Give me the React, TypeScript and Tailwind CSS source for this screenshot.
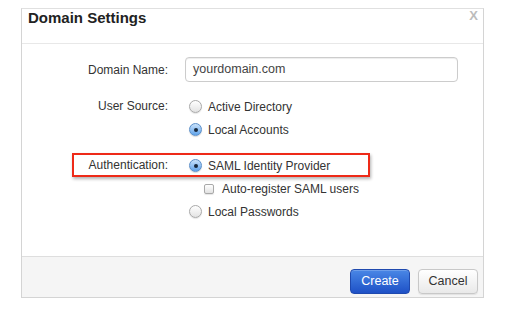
import type { ReactNode } from 'react';

const Radio = ({ checked }: { checked?: boolean }) =>
  checked ? (
    <span className="relative flex h-[13px] w-[13px] shrink-0 items-center justify-center rounded-full border border-[#5b8fc9] bg-gradient-to-b from-[#c9e2fa] to-[#5fa3ea] shadow-[0_1px_1px_rgba(0,0,0,0.15)]">
      <span className="h-[4px] w-[4px] rounded-full bg-[#17283b]" />
    </span>
  ) : (
    <span className="h-[13px] w-[13px] shrink-0 rounded-full border border-[#a9a9a9] bg-gradient-to-b from-[#ffffff] to-[#e3e3e3] shadow-[0_1px_1px_rgba(0,0,0,0.1)]" />
  );

const Checkbox = () => (
  <span className="h-[10px] w-[10px] shrink-0 rounded-[2px] border border-[#a9a9a9] bg-gradient-to-b from-[#ffffff] to-[#e2e2e2] shadow-[0_1px_1px_rgba(0,0,0,0.1)]" />
);

const Option = ({ children, checked }: { children: ReactNode; checked?: boolean }) => (
  <div className="flex h-[23px] items-center gap-[6px]">
    <Radio checked={checked} />
    <span>{children}</span>
  </div>
);

const App = () => {
  return (
    <div className="min-h-screen bg-white pl-[21px] pt-[8px] font-['Liberation_Sans',Arial,sans-serif] text-[12px] text-[#333]">
      <div className="flex h-[290px] w-[463px] flex-col border border-[#d4d4d4] border-t-[#e0e0e0] bg-white">
        {/* Header */}
        <div className="relative h-[35px] shrink-0 border-b border-[#e8e8e8] pl-[6px]">
          <h3 className="text-[15px] font-bold leading-[18px] text-[#222]">Domain Settings</h3>
          <span className="absolute right-[5px] top-[0px] text-[13px] font-bold leading-[13px] text-[#bcbcbc]">X</span>
        </div>

        {/* Body */}
        <div className="flex-1 pt-[13px]">
          <div className="flex h-[25px] items-center">
            <label className="w-[146px] text-right">Domain Name:</label>
            <div className="ml-[17px] flex h-[25px] w-[273px] items-center rounded-[4px] border border-[#cccccc] pl-[7px] text-[12.5px] text-[#444] shadow-[inset_0_1px_1px_rgba(0,0,0,0.075)]">
              yourdomain.com
            </div>
          </div>

          <div className="mt-[13px] flex items-start">
            <div className="w-[146px] text-right leading-[23px]">User Source:</div>
            <div className="ml-[21px] flex flex-col">
              <Option>Active Directory</Option>
              <Option checked>Local Accounts</Option>
            </div>
          </div>

          <div className="relative mt-[13px] flex items-start">
            <div className="w-[146px] text-right leading-[23px]">Authentication:</div>
            <div className="ml-[21px] flex flex-col">
              <Option checked>SAML Identity Provider</Option>
              <div className="flex h-[23px] items-center gap-[8px] pl-[15px]">
                <Checkbox />
                <span>Auto-register SAML users</span>
              </div>
              <Option>Local Passwords</Option>
            </div>
            {/* highlight annotation */}
            <div className="absolute left-[50px] top-[-1px] h-[24px] w-[298px] border-2 border-[#ee2a18] shadow-[1px_2px_3px_rgba(0,0,0,0.3)]" />
          </div>
        </div>

        {/* Footer */}
        <div className="flex h-[41px] shrink-0 items-start justify-end gap-[8px] border-t border-[#dedede] bg-[#f5f5f5] pr-[5px] pt-[12px]">
          <button className="h-[25px] w-[60px] rounded-[4px] border border-[#1f49ae] bg-gradient-to-b from-[#4a87e6] to-[#1f50c6] text-[12.5px] text-white shadow-[inset_0_1px_0_rgba(255,255,255,0.2)]">
            Create
          </button>
          <button className="h-[25px] w-[60px] rounded-[4px] border border-[#c8c8c8] bg-gradient-to-b from-[#ffffff] to-[#e9e9e9] text-[12.5px] text-[#333] shadow-[0_1px_1px_rgba(0,0,0,0.08)]">
            Cancel
          </button>
        </div>
      </div>
    </div>
  );
};

export default App;
